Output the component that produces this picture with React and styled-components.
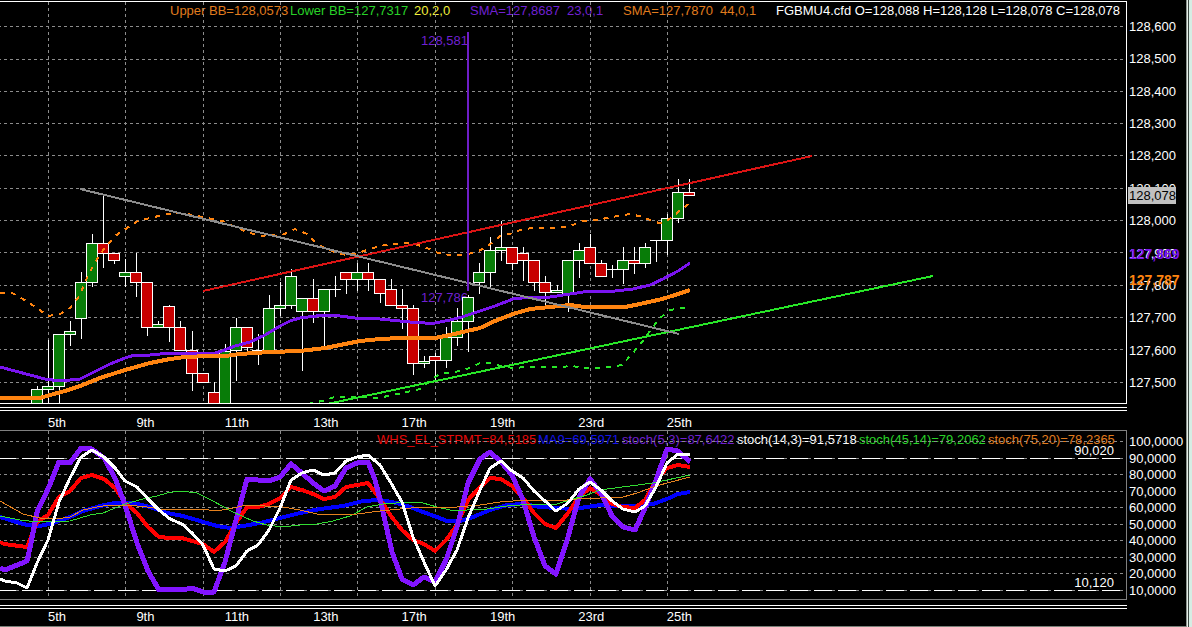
import React from "react";
import styled, { createGlobalStyle, css } from "styled-components";

const purple = "#7a14f0";
const orange = "#ff8410";
const lime = "#28e628";
const red = "#c80000";
const green = "#087c08";

const GlobalStyle = createGlobalStyle`
  * {
    box-sizing: border-box;
  }
  body {
    margin: 0;
    background: #000;
    color: #fff;
    font: 13px/16px "Liberation Sans", Arial, sans-serif;
  }
`;

const days = ["5th", "9th", "11th", "13th", "17th", "19th", "23rd", "25th"];
const dayLines = [48, 125, 203, 280, 357, 435, 512, 590, 667];

const prices = [
  "128,600",
  "128,500",
  "128,400",
  "128,300",
  "128,200",
  "128,100",
  "128,000",
  "127,900",
  "127,800",
  "127,700",
  "127,600",
  "127,500"
];
const priceLines = [26, 59, 91, 123, 155, 188, 220, 252, 285, 317, 349, 382];

const levels = [
  "100,0000",
  "90,0000",
  "80,0000",
  "70,0000",
  "60,0000",
  "50,0000",
  "40,0000",
  "30,0000",
  "20,0000",
  "10,0000"
];
const levelLines = [441, 458, 474, 491, 507, 524, 540, 557, 573, 590];

const priceLegend = [
  { text: "Upper BB=128,0573", color: "#e07c1e", width: 120 },
  { text: "Lower BB=127,7317", color: "#28d228", width: 124 },
  { text: "20,2,0", color: "#f0f03c", width: 56 },
  { text: "SMA=127,8687", color: "#7020d2", width: 97 },
  { text: "23,0,1", color: "#7020d2", width: 56 },
  { text: "SMA=127,7870", color: "#e07c1e", width: 97 },
  { text: "44,0,1", color: "#e07c1e", width: 56 },
  {
    text: "FGBMU4.cfd O=128,088 H=128,128 L=128,078 C=128,078",
    color: "#fff",
    width: 338
  }
];

const stochLegend = [
  { text: "WHS_EL_STPMT=84,5185", color: "#e60a0a", width: 161 },
  { text: "MA9=69,5971", color: "#1414e6", width: 84 },
  { text: "stoch(5,3)=87,6422", color: "#7020d2", width: 115 },
  { text: "stoch(14,3)=91,5718", color: "#fff", width: 122 },
  { text: "stoch(45,14)=79,2062", color: "#28d228", width: 129 },
  { text: "stoch(75,20)=78,2365", color: "#e07c1e", width: 126 }
];

// [x, body top, body bottom, high, low, up]
const candles = [
  [37, 389, 404, 386, 404, 1],
  [48, 386, 389, 340, 403, 1],
  [59, 334, 386, 334, 403, 1],
  [70, 331, 334, 321, 345, 1],
  [81, 282, 318, 272, 338, 1],
  [92, 243, 282, 234, 286, 1],
  [103, 243, 253, 196, 267, 0],
  [114, 253, 260, 253, 263, 0],
  [125, 272, 276, 259, 286, 1],
  [136, 272, 282, 253, 296, 0],
  [147, 282, 327, 282, 335, 0],
  [158, 324, 327, 321, 327, 1],
  [169, 306, 327, 305, 341, 0],
  [180, 327, 350, 321, 350, 0],
  [192, 350, 373, 331, 390, 0],
  [203, 373, 382, 373, 382, 0],
  [214, 392, 404, 382, 404, 0],
  [225, 351, 404, 344, 404, 1],
  [236, 327, 350, 318, 380, 1],
  [247, 327, 347, 327, 351, 0],
  [258, 350, 350, 334, 364, 1],
  [269, 308, 350, 295, 350, 1],
  [280, 305, 308, 282, 315, 1],
  [291, 276, 305, 269, 308, 1],
  [302, 298, 311, 298, 370, 1],
  [313, 298, 311, 279, 322, 0],
  [324, 289, 311, 289, 345, 1],
  [335, 289, 289, 276, 296, 1],
  [346, 272, 279, 272, 293, 0],
  [357, 272, 279, 263, 290, 1],
  [368, 272, 279, 263, 290, 0],
  [380, 279, 293, 279, 302, 0],
  [391, 289, 305, 279, 305, 0],
  [402, 305, 308, 289, 328, 0],
  [413, 308, 363, 305, 374, 0],
  [424, 361, 363, 356, 367, 1],
  [435, 356, 360, 353, 380, 0],
  [446, 337, 360, 327, 367, 1],
  [457, 321, 337, 308, 345, 1],
  [468, 297, 321, 295, 351, 1],
  [479, 272, 282, 263, 293, 1],
  [490, 250, 272, 237, 287, 1],
  [501, 247, 250, 221, 260, 1],
  [512, 247, 263, 247, 269, 0],
  [523, 253, 260, 247, 280, 0],
  [534, 260, 282, 260, 290, 0],
  [545, 282, 292, 276, 306, 0],
  [557, 290, 292, 285, 292, 1],
  [568, 260, 294, 260, 311, 1],
  [579, 250, 260, 243, 277, 1],
  [590, 247, 263, 234, 263, 0],
  [601, 263, 276, 260, 276, 0],
  [612, 269, 269, 265, 277, 1],
  [623, 260, 269, 247, 283, 1],
  [634, 260, 263, 247, 273, 0],
  [645, 247, 263, 243, 267, 1],
  [656, 240, 240, 240, 261, 1],
  [667, 218, 240, 214, 254, 1],
  [678, 192, 218, 179, 222, 1],
  [689, 192, 195, 179, 195, 0]
];

const priceSeries = [
  {
    color: orange,
    width: 2,
    dash: "5 6",
    points:
      "0,293 12,293 23,299 37,308 48,316 60,314 70,308 80,295 85,282 95,262 104,249 115,236 127,228 138,221 150,218 163,215 175,213 187,214 198,216 212,219 223,221 235,227 247,232 260,236 270,235 280,236 295,229 307,234 317,244 327,249 337,253 347,255 355,254 367,250 380,246 393,244 403,243 415,244 427,248 438,253 450,255 463,255 477,252 488,246 500,236 513,233 523,229 535,228 558,228 570,226 583,221 597,220 607,218 618,216 630,214 643,217 655,222 660,223 667,221 678,212 690,203"
  },
  {
    color: lime,
    width: 2,
    dash: "5 6",
    points:
      "308,404 322,401 335,397 360,397 378,398 393,395 407,392 420,389 432,379 440,374 455,372 467,369 480,363 490,363 500,366 513,368 527,367 560,367 572,366 583,368 600,368 610,367 622,365 632,354 642,342 650,331 660,318 670,310 682,308 690,308"
  },
  {
    color: purple,
    width: 3,
    points:
      "0,367 15,371 30,375 45,379 60,381 80,379 92,373 110,364 125,358 135,355 150,355 170,353 190,353 205,354 215,353 222,351 235,346 250,342 265,335 280,326 290,321 300,318 325,315 340,316 355,318 380,319 400,321 410,322 425,323 435,323 450,320 462,317 480,311 495,306 513,299 530,297 550,297 570,294 590,291 615,291 633,289 650,285 663,279 678,271 690,263"
  },
  {
    color: orange,
    width: 4,
    points:
      "0,398 40,398 50,395 65,391 80,386 100,378 125,370 150,363 170,359 185,357 210,356 225,356 240,354 270,352 300,351 325,348 345,344 360,341 380,339 400,338 435,338 450,335 480,328 495,321 513,314 530,309 550,307 570,305 585,307 625,307 640,304 662,299 675,295 690,290"
  }
];

const trendLines = [
  { color: "#dc1414", points: "203,291 812,156" },
  { color: lime, points: "327,404 933,276" },
  { color: "#8c8c8c", points: "80,189 679,334" },
  { color: "#6e1ec8", points: "468,32 468,291" }
];

const stochSeries = [
  {
    color: "#0000ff",
    width: 4,
    points:
      "0,517 13,521 27,525 40,526 53,523 70,517 83,511 100,506 115,503 133,503 150,507 167,513 183,516 200,521 217,526 230,528 243,526 260,523 280,518 300,513 320,509 343,506 363,501 380,500 397,503 410,507 423,512 437,517 447,521 460,521 473,517 490,510 507,505 523,504 540,507 557,508 573,509 587,507 600,505 620,506 637,506 653,504 667,499 678,494 690,492"
  },
  {
    color: "#ff0000",
    width: 4,
    points:
      "0,542 4,544 27,547 37,522 48,515 59,497 70,491 81,478 92,475 104,479 115,488 125,503 137,513 148,527 159,537 170,538 182,538 192,541 203,544 214,552 225,542 236,523 247,507 258,507 269,504 280,498 291,487 302,490 313,494 324,499 335,497 346,487 357,485 368,483 380,499 391,516 402,530 413,540 424,544 435,551 446,540 457,525 468,500 480,487 490,478 501,479 512,486 523,498 534,513 545,524 556,528 568,513 579,497 590,488 601,495 612,504 623,507 635,508 645,500 656,480 667,468 678,465 690,467"
  },
  {
    color: "#8214ff",
    width: 5,
    points:
      "0,568 5,570 27,561 31,543 37,512 48,489 59,462 70,463 81,448 92,449 104,458 115,478 125,505 137,543 148,571 159,590 170,589 182,590 192,588 203,592 214,592 225,562 236,520 247,479 258,480 269,481 280,477 291,464 302,473 313,483 324,491 335,486 346,468 357,463 368,462 375,480 381,503 392,552 402,579 413,585 424,577 435,582 446,560 457,527 468,483 480,459 490,452 501,462 512,475 523,500 534,537 545,566 556,574 568,537 579,497 590,479 601,493 612,516 623,527 635,530 645,508 656,480 667,449 678,451 690,462"
  },
  {
    color: "#32dc32",
    width: 1,
    points:
      "0,516 20,520 37,522 70,521 90,515 103,513 125,504 143,499 157,496 167,493 180,491 197,493 213,501 233,512 253,521 267,525 283,527 300,525 317,524 333,521 350,516 367,507 383,504 410,502 423,503 437,507 450,510 467,510 487,509 507,506 533,504 557,504 573,499 587,495 600,490 630,486 653,483 667,480 690,475"
  },
  {
    color: "#e6821e",
    width: 1,
    points:
      "0,501 23,514 40,518 57,519 70,517 83,510 97,507 110,505 127,505 147,507 167,510 187,509 200,509 217,511 233,508 247,505 283,507 300,510 317,514 357,514 380,511 400,509 423,507 457,507 480,505 500,502 527,500 557,501 577,499 600,498 623,497 637,493 653,487 667,483 690,477"
  },
  {
    color: "#fff",
    width: 3,
    points:
      "0,579 5,581 17,583 27,588 37,563 48,540 59,502 70,478 81,457 92,450 104,457 115,468 125,481 137,487 148,499 159,510 170,519 182,524 192,533 203,545 214,569 225,571 236,566 247,551 258,545 269,530 280,508 291,480 302,473 313,470 324,475 335,473 346,461 357,457 368,455 380,465 391,483 402,502 413,537 424,562 435,586 446,570 457,550 468,518 480,490 490,468 501,461 512,471 523,478 534,491 545,501 556,511 568,503 579,489 590,482 601,490 612,501 623,509 635,512 645,506 656,487 667,463 678,454 690,455"
  }
];

const Screen = styled.div`
  display: flex;
  min-height: 100vh;
  overflow: hidden;
`;

const Terminal = styled.main`
  flex: 1;
  min-width: 0;
  padding-top: 1px;
  border-bottom: 1px solid #788078;
`;

const WindowEdge = styled.div`
  flex: none;
  width: 6px;
  background: #d6ede4;
  border-left: 1px solid #8c968f;
  box-shadow: inset 1px 0 #e8efeb, inset 2px 0 #3c4842;
`;

const Row = styled.section`
  display: grid;
  grid-template-columns: minmax(0, 1fr) 59px;
`;

const Pane = styled.div`
  position: relative;
  height: ${props => props.height}px;
  border: 1px solid ${props => props.frame};
  border-left: 0;
`;

const Plot = styled.svg`
  position: absolute;
  inset: 0;
  display: block;
  width: 100%;
  height: 100%;
  shape-rendering: crispEdges;
`;

const LegendRow = styled.div`
  display: flex;
  justify-content: flex-end;
  padding: 1px 12px 0 0;
  white-space: pre;
`;

const LegendItem = styled.span`
  flex: none;
  width: ${props => props.size}px;
  color: ${props => props.color};
`;

const Note = styled.span`
  position: absolute;
  top: ${props => props.top}px;
  ${props =>
    props.measure
      ? css`
          right: 58%;
          margin-right: 5px;
          color: #7020d2;
        `
      : css`
          right: 12px;
        `}
`;

const Scale = styled.div`
  position: relative;
  display: flex;
  flex-direction: column;
  justify-content: space-between;
  padding: ${props => props.pad};
`;

const PriceTag = styled.strong`
  position: absolute;
  left: 1px;
  top: ${props => props.top}px;
  padding-left: 1px;
  color: ${props => props.color};
  font-size: 14px;
  ${props =>
    props.last &&
    css`
      padding: 1px 0 0 1px;
      background: #c0c0c0;
      font-size: 13px;
      font-weight: normal;
    `}
`;

const TimeScale = styled.div`
  margin-right: 59px;
  padding-top: ${props => props.gap}px;
`;

const DoubleRule = styled.div`
  height: 4px;
  border: solid #fff;
  border-width: 1px 0;
`;

const DayLabels = styled.div`
  display: grid;
  grid-template-columns: repeat(8, 1fr);
  height: ${props => props.height}px;
  padding: ${props => props.pad}px 33% 0 48px;
`;

function Legend({ items }) {
  return (
    <LegendRow>
      {items.map((item, i) => (
        <LegendItem key={i} color={item.color} size={item.width}>
          {item.text}
        </LegendItem>
      ))}
    </LegendRow>
  );
}

function Grid({ rows, top, bottom }) {
  return (
    <g stroke="#8c8c8c" strokeDasharray="3 3">
      {rows.map(y => (
        <line key={y} x1="-2" x2="1123" y1={y + 0.5} y2={y + 0.5} />
      ))}
      {dayLines.map(x => (
        <line key={x} x1={x + 0.5} x2={x + 0.5} y1={top} y2={bottom} />
      ))}
    </g>
  );
}

function Series({ color, width = 2, dash, points }) {
  return (
    <polyline
      fill="none"
      stroke={color}
      strokeWidth={width}
      strokeDasharray={dash}
      strokeLinejoin="round"
      points={points}
    />
  );
}

function Candle({ data }) {
  const [x, top, bottom, high, low, up] = data;
  return (
    <g stroke="#fff">
      <line x1={x + 0.5} x2={x + 0.5} y1={high} y2={low + 1} />
      {top === bottom ? (
        <line x1={x - 6} x2={x + 6} y1={top + 0.5} y2={top + 0.5} />
      ) : (
        <rect
          x={x - 5.5}
          y={top + 0.5}
          width="11"
          height={bottom - top}
          fill={up ? green : red}
        />
      )}
    </g>
  );
}

function Days({ gap, height, pad }) {
  return (
    <TimeScale gap={gap}>
      <DoubleRule />
      <DayLabels height={height} pad={pad}>
        {days.map(day => (
          <span key={day}>{day}</span>
        ))}
      </DayLabels>
    </TimeScale>
  );
}

function PriceChart() {
  return (
    <Row>
      <Pane height={403} frame="#fff">
        <Legend items={priceLegend} />
        <Note measure top={31}>
          128,581
        </Note>
        <Note measure top={288}>
          127,786
        </Note>
        <Plot viewBox="0 2 1126 401" preserveAspectRatio="none">
          <Grid rows={priceLines} top={2} bottom={401} />
          {candles.map(candle => (
            <Candle key={candle[0]} data={candle} />
          ))}
          {priceSeries.map((series, i) => (
            <Series key={i} {...series} />
          ))}
          {trendLines.map((line, i) => (
            <Series key={i} {...line} />
          ))}
        </Plot>
      </Pane>
      <Scale pad="18px 0 13px 2px">
        {prices.map(price => (
          <span key={price}>{price}</span>
        ))}
        <PriceTag last top={186} color="#000">
          128,078
        </PriceTag>
        <PriceTag top={245} color={purple}>
          127,869
        </PriceTag>
        <PriceTag top={271} color={orange}>
          127,787
        </PriceTag>
      </Scale>
    </Row>
  );
}

function StochChart() {
  return (
    <Row>
      <Pane height={170} frame="#808080">
        <Legend items={stochLegend} />
        <Note top={12}>90,020</Note>
        <Note top={144}>10,120</Note>
        <Plot viewBox="0 431 1126 168" preserveAspectRatio="none">
          <Grid rows={levelLines} top={431} bottom={599} />
          <g stroke="#fff" strokeDasharray="18 6">
            <line x1="-2" x2="1121" y1="458.5" y2="458.5" />
            <line x1="-2" x2="1121" y1="590.5" y2="590.5" />
          </g>
          {stochSeries.map((series, i) => (
            <Series key={i} {...series} />
          ))}
        </Plot>
      </Pane>
      <Scale pad="4px 0 1px 2px">
        {levels.map(level => (
          <span key={level}>{level}</span>
        ))}
      </Scale>
    </Row>
  );
}

export default function App() {
  return (
    <Screen>
      <GlobalStyle />
      <Terminal>
        <PriceChart />
        <Days gap={3} height={19} pad={4} />
        <StochChart />
        <Days gap={5} height={17} pad={0} />
      </Terminal>
      <WindowEdge />
    </Screen>
  );
}
